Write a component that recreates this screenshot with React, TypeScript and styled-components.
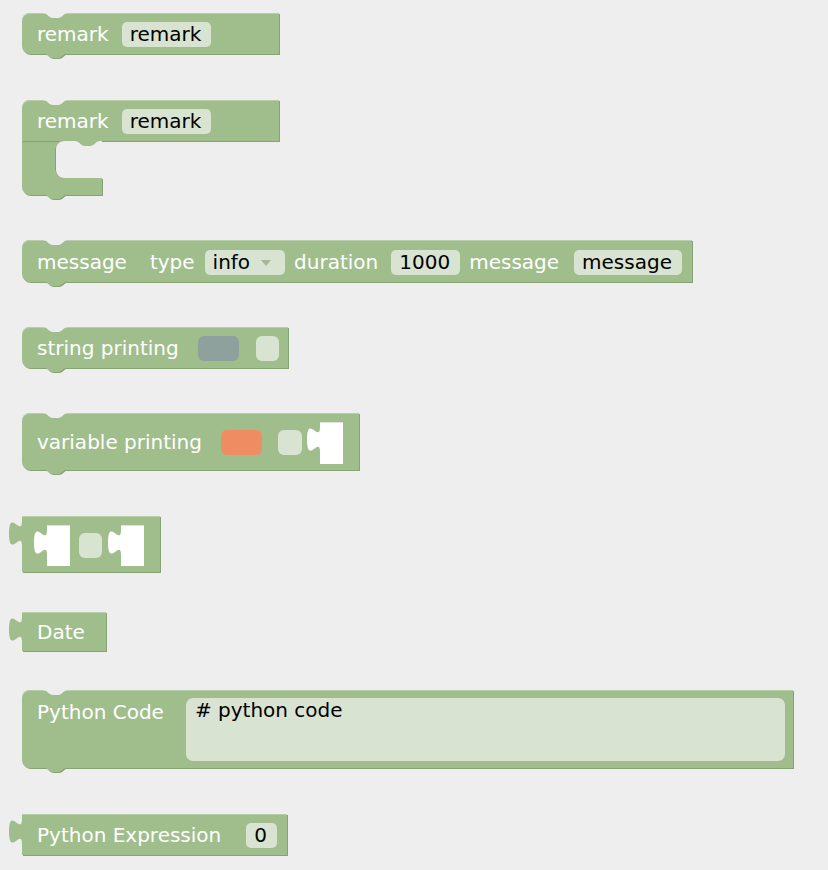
import React from 'react';
import styled, { createGlobalStyle } from 'styled-components';

const GREEN = '#a0be8c';
const GREEN_DARK = '#86a373';
const GREEN_LIGHT = '#b7cea8';
const FIELD = '#d9e3d1';
const PAGE = '#eeeeee';

const GlobalStyle = createGlobalStyle`
  html, body {
    margin: 0;
    background: ${PAGE};
  }
  body {
    font-family: 'DejaVu Sans', 'Liberation Sans', sans-serif;
  }
`;

const Workspace = styled.div`
  display: flex;
  flex-direction: column;
  align-items: flex-start;
  box-sizing: border-box;
  min-height: 870px;
  padding: 13px 0 0 22px;
`;

const Block = styled.div<{
  $w: number;
  $h: number;
  $mt?: number;
  $radius?: string;
  $top?: boolean;
}>`
  position: relative;
  display: flex;
  align-items: ${p => (p.$top ? 'flex-start' : 'center')};
  flex-shrink: 0;
  box-sizing: border-box;
  width: ${p => p.$w}px;
  height: ${p => p.$h}px;
  margin-top: ${p => p.$mt ?? 0}px;
  padding: ${p => (p.$top ? '8px 0 0 15px' : '2px 0 0 15px')};
  background: ${GREEN};
  border-radius: ${p => p.$radius ?? '8px 0 0 8px'};
  box-shadow: inset 0 1px 0 ${GREEN_LIGHT}, 1px 1px 0 ${GREEN_DARK};
`;

const Label = styled.span<{ $ml?: number; $mt?: number }>`
  flex-shrink: 0;
  margin-left: ${p => p.$ml ?? 0}px;
  margin-top: ${p => p.$mt ?? 0}px;
  color: #fff;
  font-size: 20px;
  line-height: 25px;
  white-space: nowrap;
`;

const Field = styled.span<{ $ml?: number }>`
  display: inline-flex;
  align-items: center;
  flex-shrink: 0;
  height: 25px;
  margin-left: ${p => p.$ml ?? 0}px;
  padding: 0 10px 0 8px;
  border-radius: 5px;
  background: ${FIELD};
  color: #000;
  font-size: 20px;
  line-height: 25px;
  white-space: nowrap;
`;

const Swatch = styled.span<{ $ml: number; $w: number; $color: string }>`
  flex-shrink: 0;
  width: ${p => p.$w}px;
  height: 25px;
  margin-left: ${p => p.$ml}px;
  border-radius: 6px;
  background: ${p => p.$color};
`;

const Arrow = styled.svg`
  width: 10px;
  height: 6px;
  margin: 2px 4px 0 11px;
`;

const Slot = styled.div<{ $ml: number; $h: number }>`
  position: relative;
  flex-shrink: 0;
  width: 23px;
  height: ${p => p.$h}px;
  margin-left: ${p => p.$ml}px;
  background: #fff;
  box-shadow: inset 0 1px 0 rgba(0, 0, 0, 0.12);
`;

const CodeArea = styled.div`
  flex-shrink: 0;
  box-sizing: border-box;
  width: 599px;
  height: 63px;
  margin-left: 22px;
  padding: 0 9px;
  border-radius: 7px;
  background: ${FIELD};
  color: #000;
  font-size: 20px;
  line-height: 25px;
  white-space: pre;
`;

/* C-shaped statement block */
const CBlock = styled.div<{ $mt: number }>`
  display: flex;
  flex-direction: column;
  margin-top: ${p => p.$mt}px;
`;

const CMouth = styled.div`
  display: flex;
  width: 80px;
  height: 37px;
  background: ${GREEN};
`;

const CGap = styled.div`
  position: relative;
  flex: 1;
  margin-left: 33px;
  background: ${PAGE};
  border-radius: 8px 0 0 8px;
  box-shadow: inset 1px 0 0 ${GREEN_DARK};
`;

const CFoot = styled.div`
  position: relative;
  width: 80px;
  height: 17px;
  background: ${GREEN};
  border-radius: 0 0 0 8px;
  box-shadow: 1px 1px 0 ${GREEN_DARK};
`;

/* connection shapes, drawn over the block edge */
const NotchSvg = styled.svg<{ $at: 'top' | 'bottom'; $left?: number }>`
  position: absolute;
  left: ${p => p.$left ?? 21}px;
  top: ${p => (p.$at === 'top' ? '0' : 'calc(100% - 1px)')};
  width: 26px;
  height: 7px;
  overflow: visible;
`;

const NOTCH = 'M0,0 C4,0 6,5 10,5 L15,5 C19,5 21,0 25,0 Z';

const TopNotch = () => (
  <NotchSvg $at="top" viewBox="0 0 26 7">
    <path d={NOTCH} fill={PAGE} />
  </NotchSvg>
);

const BottomBump = ({ left }: { left?: number }) => (
  <NotchSvg $at="bottom" $left={left} viewBox="0 0 26 7">
    <path d={NOTCH} fill={GREEN_DARK} transform="translate(1,1)" />
    <path d={NOTCH} fill={GREEN} />
  </NotchSvg>
);

const InnerBump = () => (
  <NotchSvg $at="top" $left={20} viewBox="0 0 26 7">
    <path d={NOTCH} fill={GREEN} />
  </NotchSvg>
);

const TabSvg = styled.svg`
  position: absolute;
  left: -13px;
  top: 5px;
  width: 14px;
  height: 25px;
  overflow: visible;
`;

const TAB = 'M14,0 L13,0 C13,16.7 0,-13.3 0,12.5 C0,38.3 13,8.3 13,25 L14,25 Z';

const Tab = ({ color }: { color: string }) => (
  <TabSvg viewBox="0 0 14 25">
    <path d={TAB} fill={color} />
  </TabSvg>
);

const DropArrow = () => (
  <Arrow viewBox="0 0 10 6">
    <path d="M0,0 L10,0 L5,6 Z" fill="#a3b997" />
  </Arrow>
);

const App = () => {
  return (
    <>
      <GlobalStyle />
      <Workspace>
        <Block $w={257} $h={41}>
          <TopNotch />
          <Label>remark</Label>
          <Field $ml={13}>remark</Field>
          <BottomBump />
        </Block>

        <CBlock $mt={46}>
          <Block $w={257} $h={41} $radius="8px 0 0 0">
            <TopNotch />
            <Label>remark</Label>
            <Field $ml={13}>remark</Field>
          </Block>
          <CMouth>
            <CGap>
              <InnerBump />
            </CGap>
          </CMouth>
          <CFoot>
            <BottomBump />
          </CFoot>
        </CBlock>

        <Block $w={670} $h={42} $mt={45}>
          <TopNotch />
          <Label>message</Label>
          <Label $ml={23}>type</Label>
          <Field $ml={10}>
            info
            <DropArrow />
          </Field>
          <Label $ml={9}>duration</Label>
          <Field $ml={13}>1000</Field>
          <Label $ml={9}>message</Label>
          <Field $ml={15}>message</Field>
          <BottomBump />
        </Block>

        <Block $w={266} $h={41} $mt={45}>
          <TopNotch />
          <Label>string printing</Label>
          <Swatch $ml={19} $w={41} $color="#8fa19d" />
          <Swatch $ml={17} $w={23} $color={FIELD} />
          <BottomBump />
        </Block>

        <Block $w={337} $h={57} $mt={45}>
          <TopNotch />
          <Label>variable printing</Label>
          <Swatch $ml={19} $w={41} $color="#ef8c62" />
          <Swatch $ml={16} $w={24} $color={FIELD} />
          <Slot $ml={18} $h={42}>
            <Tab color="#fff" />
          </Slot>
          <BottomBump />
        </Block>

        <Block $w={138} $h={56} $mt={46} $radius="0">
          <Tab color={GREEN} />
          <Slot $ml={10} $h={41}>
            <Tab color="#fff" />
          </Slot>
          <Swatch $ml={9} $w={23} $color={FIELD} />
          <Slot $ml={19} $h={41}>
            <Tab color="#fff" />
          </Slot>
        </Block>

        <Block $w={84} $h={39} $mt={40} $radius="0">
          <Tab color={GREEN} />
          <Label>Date</Label>
        </Block>

        <Block $w={771} $h={78} $mt={39} $top>
          <TopNotch />
          <Label $mt={2}>Python Code</Label>
          <CodeArea># python code</CodeArea>
          <BottomBump />
        </Block>

        <Block $w={265} $h={41} $mt={46} $radius="0">
          <Tab color={GREEN} />
          <Label>Python Expression</Label>
          <Field $ml={25}>0</Field>
        </Block>
      </Workspace>
    </>
  );
};

export default App;
